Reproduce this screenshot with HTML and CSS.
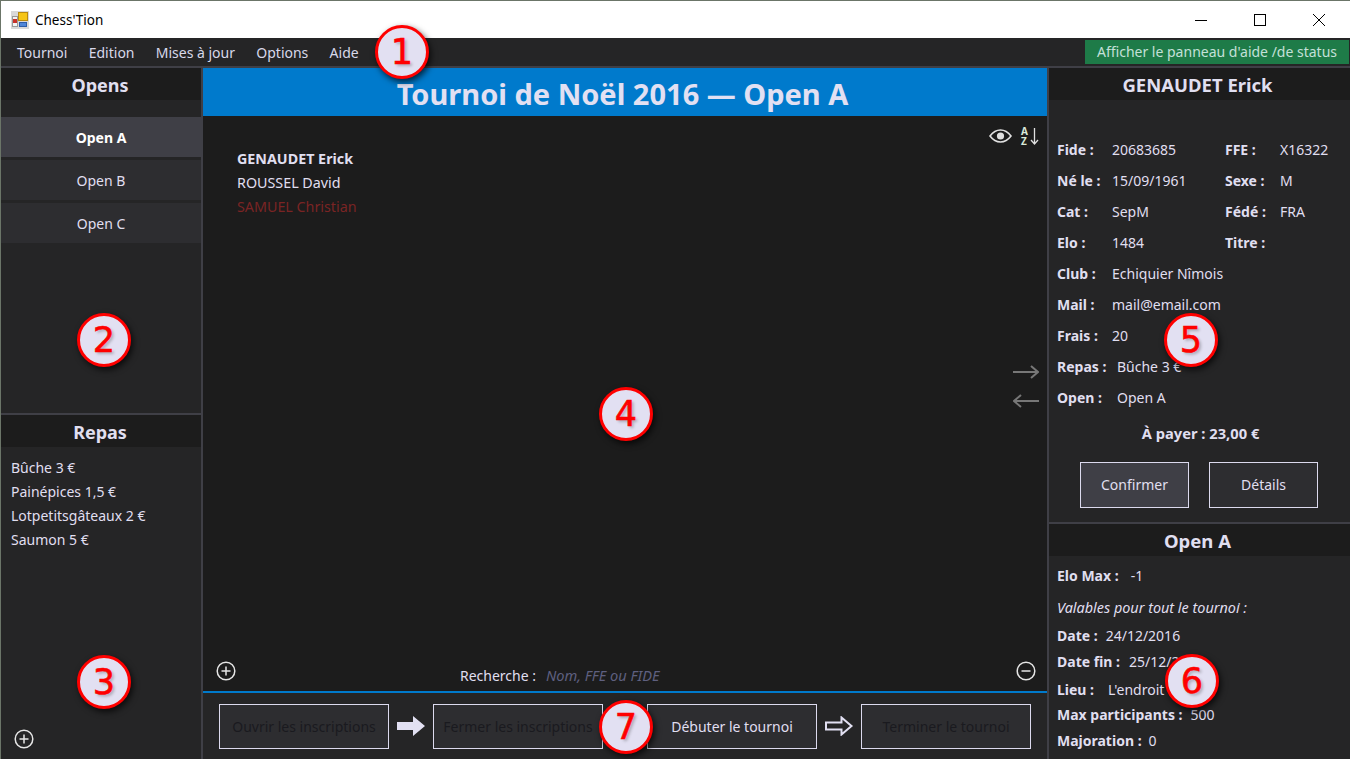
FILE: index.html
```html
<!DOCTYPE html>
<html lang="fr">
<head>
  <meta charset="UTF-8" />
  <title>Chess'Tion</title>
  <link rel="stylesheet" href="styles.css">
</head>
<body>
<div class="window">
  <header class="titlebar">
    <svg class="app-icon" width="18" height="18" viewBox="0 0 18 18">
      <rect x="0" y="0" width="18" height="18" fill="#d9d9d9"/>
      <rect x="7.500" y="1.500" width="9" height="8" fill="#f5c518" stroke="#b98a10"/>
      <rect x="1.500" y="5.500" width="5" height="10" fill="#f4f4f4" stroke="#999"/>
      <rect x="2" y="8" width="4" height="4" fill="#c8322a"/>
      <rect x="8.500" y="11.500" width="7" height="4" fill="#4f86d8" stroke="#2d5ca8"/>
    </svg>
    <span class="app-name">Chess'Tion</span>
    <div class="win-controls">
      <svg class="win-btn" width="14" height="14" viewBox="0 0 14 14"><path d="M1 7.500h12" stroke="#000" fill="none"/></svg>
      <svg class="win-btn" width="14" height="14" viewBox="0 0 14 14"><rect x="1.500" y="1.500" width="11" height="11" stroke="#000" fill="none"/></svg>
      <svg class="win-btn" width="14" height="14" viewBox="0 0 14 14"><path d="M1 1l12 12M13 1L1 13" stroke="#000" fill="none"/></svg>
    </div>
  </header>

  <nav class="menubar">
    <span>Tournoi</span>
    <span>Edition</span>
    <span>Mises à jour</span>
    <span>Options</span>
    <span>Aide</span>
    <div class="status-btn">Afficher le panneau d'aide /de status</div>
  </nav>

  <div class="columns">
    <aside class="left">
      <section class="opens">
        <h2 class="panel-title">Opens</h2>
        <div class="open-list">
          <div class="open-item selected">Open A</div>
          <div class="open-item">Open B</div>
          <div class="open-item">Open C</div>
        </div>
      </section>
      <section class="meals">
        <h2 class="panel-title">Repas</h2>
        <ul class="meal-list">
          <li>Bûche 3 €</li>
          <li>Painépices 1,5 €</li>
          <li>Lotpetitsgâteaux 2 €</li>
          <li>Saumon 5 €</li>
        </ul>
        <svg class="round-icon meal-add" viewBox="0 0 20 20"><circle cx="10" cy="10" r="8.800"/><path d="M10 5.500v9M5.500 10h9"/></svg>
      </section>
    </aside>

    <main class="center">
      <h1 class="banner">Tournoi de Noël 2016 — Open A</h1>
      <div class="players">
        <ul class="player-list">
          <li class="current">GENAUDET Erick</li>
          <li>ROUSSEL David</li>
          <li class="absent">SAMUEL Christian</li>
        </ul>
        <div class="player-side">
          <div class="tools">
            <svg width="23" height="14" viewBox="0 0 23 14"><path d="M1 7c3-4 6.500-6 10.500-6S19 3 22 7c-3 4-6.500 6-10.500 6S4 11 1 7z" fill="none" stroke="#e0e0e0" stroke-width="1.600"/><circle cx="11.500" cy="7" r="3.600" fill="#e0e0e0"/></svg>
            <div class="sort-icon">
              <span class="sort-letters">A<br>Z</span>
              <svg width="9" height="18" viewBox="0 0 9 18"><path d="M4.500 1v16M1 13l3.500 4L8 13" fill="none" stroke="#e0e0e0" stroke-width="1.300"/></svg>
            </div>
          </div>
          <div class="transfer">
            <svg width="26" height="14" viewBox="0 0 26 14"><path d="M0 7h25M18 1l7 6-7 6" fill="none" stroke="#777" stroke-width="2"/></svg>
            <svg width="26" height="14" viewBox="0 0 26 14"><path d="M26 7H1M8 1L1 7l7 6" fill="none" stroke="#777" stroke-width="2"/></svg>
          </div>
        </div>
      </div>
      <div class="search-row">
        <svg class="round-icon" viewBox="0 0 20 20"><circle cx="10" cy="10" r="8.800"/><path d="M10 5.500v9M5.500 10h9"/></svg>
        <div class="search">
          <label for="search">Recherche :</label>
          <input id="search" type="text" placeholder="Nom, FFE ou FIDE" />
        </div>
        <svg class="round-icon" viewBox="0 0 20 20"><circle cx="10" cy="10" r="8.800"/><path d="M5.500 10h9"/></svg>
      </div>
      <footer class="steps">
        <div class="btn step disabled">Ouvrir les inscriptions</div>
        <svg class="step-arrow" width="28" height="20" viewBox="-8 0 44 20"><path d="M0 6h16V0l12 10-12 10v-6H0z" fill="#e2e0f2"/></svg>
        <div class="btn step disabled">Fermer les inscriptions</div>
        <div class="step-arrow"></div>
        <div class="btn step">Débuter le tournoi</div>
        <svg class="step-arrow" width="28" height="20" viewBox="-8 0 44 20"><path d="M1 6.500h15.500V1.500L26.500 10l-10 8.500v-5H1z" fill="none" stroke="#e2e0f2" stroke-width="2"/></svg>
        <div class="btn step disabled">Terminer le tournoi</div>
      </footer>
    </main>

    <aside class="right">
      <section class="player-card">
        <h2 class="panel-title">GENAUDET Erick</h2>
        <div class="facts">
          <div class="fact"><b>Fide :</b><span class="val">20683685</span><b>FFE :</b><span>X16322</span></div>
          <div class="fact"><b>Né le :</b><span class="val">15/09/1961</span><b>Sexe :</b><span>M</span></div>
          <div class="fact"><b>Cat :</b><span class="val">SepM</span><b>Fédé :</b><span>FRA</span></div>
          <div class="fact"><b>Elo :</b><span class="val">1484</span><b>Titre :</b></div>
          <div class="fact"><b>Club :</b><span>Echiquier Nîmois</span></div>
          <div class="fact"><b>Mail :</b><span>mail@email.com</span></div>
          <div class="fact"><b>Frais :</b><span>20</span></div>
          <div class="fact wide"><b>Repas :</b><span>Bûche 3 €</span></div>
          <div class="fact wide"><b>Open :</b><span>Open A</span></div>
        </div>
        <div class="to-pay">À payer : 23,00 €</div>
        <div class="card-actions">
          <div class="btn card-btn hot">Confirmer</div>
          <div class="btn card-btn">Détails</div>
        </div>
      </section>
      <section class="open-card">
        <h2 class="panel-title">Open A</h2>
        <div class="open-facts">
          <div class="info elo"><b>Elo Max :</b><span>-1</span></div>
          <div class="note">Valables pour tout le tournoi :</div>
          <div class="info date"><b>Date :</b><span>24/12/2016</span></div>
          <div class="info end"><b>Date fin :</b><span>25/12/2016</span></div>
          <div class="info place"><b>Lieu :</b><span>L'endroit</span></div>
          <div class="info max"><b>Max participants :</b><span>500</span></div>
          <div class="info raise"><b>Majoration :</b><span>0</span></div>
        </div>
      </section>
    </aside>
  </div>
</div>

<div class="badge b1">1</div>
<div class="badge b2">2</div>
<div class="badge b3">3</div>
<div class="badge b4">4</div>
<div class="badge b5">5</div>
<div class="badge b6">6</div>
<div class="badge b7">7</div>
</body>
</html>
```

FILE: styles.css
```css
* {
  padding: 0;
  margin: 0;
  box-sizing: border-box;
}
body {
  width: 1350px;
  height: 759px;
  overflow: hidden;
  position: relative;
  font-family: "Noto Sans", "Open Sans", sans-serif;
  font-size: 14px;
  color: #e0dff0;
  background: #252526;
}
ul {
  list-style: none;
}
.window {
  height: 759px;
  display: flex;
  flex-direction: column;
  border-top: 1px solid #6b7568;
  border-left: 1px solid #6b7568;
}

/* title bar */
.titlebar {
  height: 37px;
  flex: none;
  background: #fff;
  color: #000;
  display: flex;
  align-items: center;
  padding-left: 10px;
}
.app-icon {
  margin-right: 6px;
}
.app-name {
  font-size: 13.5px;
}
.win-controls {
  margin-left: auto;
  display: flex;
  gap: 45px;
  padding-right: 24px;
}
.win-btn {
  display: block;
}

/* menu */
.menubar {
  height: 28px;
  flex: none;
  background: #252526;
  display: flex;
  align-items: center;
  gap: 21.25px;
  padding-left: 16px;
  color: #d8d8ea;
}
.status-btn {
  margin-left: auto;
  width: 264px;
  height: 24px;
  margin-right: 1px;
  background: #1e7b48;
  color: #c4e0d8;
  text-align: center;
  line-height: 24px;
}

.columns {
  flex: 1;
  display: flex;
  min-height: 0;
  border-top: 2px solid #3f3f46;
}
.left {
  width: 200px;
  flex: none;
  display: flex;
  flex-direction: column;
}
.right {
  flex: 1;
  display: flex;
  flex-direction: column;
}
.center {
  width: 848px;
  flex: none;
  display: flex;
  flex-direction: column;
  background: #1c1c1c;
  border-left: 2px solid #3f3f46;
  border-right: 2px solid #3f3f46;
}

.panel-title {
  height: 32px;
  line-height: 34px;
  background: #1c1c1c;
  text-align: center;
  font-size: 18px;
  font-weight: 700;
  padding-right: 2px;
}
.right .panel-title {
  font-size: 18.5px;
  padding-right: 4px;
}

/* left column */
.opens {
  height: 347px;
  flex: none;
  border-bottom: 2px solid #3f3f46;
}
.open-list {
  padding-top: 17px;
  display: flex;
  flex-direction: column;
  gap: 3px;
}
.open-item {
  height: 40px;
  line-height: 42px;
  text-align: center;
  background: #2d2d30;
}
.open-item.selected {
  background: #3f3f46;
  font-weight: 700;
  color: #fff;
}
.meals {
  flex: 1;
  display: flex;
  flex-direction: column;
}
.meal-list {
  padding: 9px 0 0 10px;
  flex: 1;
}
.meal-list li {
  height: 24px;
  line-height: 24px;
}
.round-icon {
  width: 20px;
  height: 20px;
  display: block;
  flex: none;
  fill: none;
  stroke: #e6e6e6;
  stroke-width: 1.5;
}
.meal-add {
  margin: 0 0 10px 13px;
}

/* centre */
.banner {
  height: 48px;
  flex: none;
  background: #007acc;
  text-align: center;
  line-height: 52px;
  font-size: 29px;
  font-weight: 700;
  color: #e2e0f2;
  padding-right: 5px;
}
.players {
  flex: 1;
  display: flex;
  min-height: 0;
}
.player-list {
  flex: 1;
  padding: 31px 0 0 34px;
  font-size: 14.3px;
}
.player-list li {
  height: 24px;
  line-height: 24px;
}
.player-list .current {
  font-weight: 700;
}
.player-list .absent {
  color: #7a2424;
}
.player-side {
  width: 60px;
  flex: none;
}
.tools {
  display: flex;
  align-items: center;
  gap: 9px;
  padding: 10px 0 0 2px;
}
.sort-icon {
  display: flex;
  align-items: center;
  gap: 2px;
}
.sort-letters {
  font-size: 10px;
  line-height: 10px;
  font-weight: 700;
  color: #d8e8d8;
}
.transfer {
  margin-top: 219px;
  padding-left: 26px;
  display: flex;
  flex-direction: column;
  gap: 15px;
}
.search-row {
  height: 33px;
  flex: none;
  display: flex;
  align-items: flex-start;
  padding: 1px 11px 0 13px;
  border-bottom: 2px solid #007acc;
}
.search {
  flex: 1;
  padding: 4px 0 0 224px;
  display: flex;
  align-items: center;
  gap: 10px;
}
.search label {
  width: 76px;
  flex: none;
  white-space: nowrap;
}
.search input {
  width: 180px;
  background: transparent;
  border: 0;
  font: italic 14.6px "Noto Sans", sans-serif;
  color: #e0dff0;
}
.search input::placeholder {
  color: #5f6080;
  opacity: 1;
}
.steps {
  height: 66px;
  flex: none;
  background: #252526;
  display: flex;
  align-items: center;
  padding-left: 16px;
}
.btn {
  border: 1px solid #dcdaee;
  background: #2d2d30;
  text-align: center;
}
.step {
  width: 170px;
  height: 45px;
  line-height: 43px;
  flex: none;
}
.disabled {
  color: #1a1a1f;
}
.step-arrow {
  width: 44px;
  flex: none;
}

/* right column */
.player-card {
  height: 456px;
  flex: none;
  border-bottom: 2px solid #3f3f46;
}
.facts {
  padding: 34px 0 0 8px;
}
.fact {
  height: 31px;
  display: flex;
  align-items: center;
}
.fact b {
  width: 55px;
  flex: none;
}
.fact .val {
  width: 113px;
  flex: none;
}
.fact.wide b {
  width: 60px;
}
.to-pay {
  margin-top: 8px;
  height: 24px;
  line-height: 24px;
  text-align: center;
  font-size: 14.7px;
  font-weight: 700;
  padding-left: 2px;
}
.card-actions {
  display: flex;
  gap: 20px;
  padding: 17px 0 0 31px;
}
.card-btn {
  width: 109px;
  height: 46px;
  line-height: 44px;
}
.card-btn.hot {
  background: #3f3f46;
}
.open-card {
  flex: 1;
}
.open-facts {
  padding-left: 8px;
}
.info {
  display: flex;
  gap: 8px;
  line-height: 24px;
  height: 24px;
}
.elo { margin-top: 8px; gap: 12px; }
.note {
  margin-top: 8px;
  height: 24px;
  line-height: 24px;
  font-style: italic;
  font-size: 14.4px;
}
.date { margin-top: 4px; }
.end { margin-top: 2px; gap: 9px; }
.place { margin-top: 4px; gap: 9px; }
.place span { margin-left: 5px; }
.max { margin-top: 1px; }
.raise { margin-top: 2px; gap: 7px; }

/* numbered callouts drawn over the screenshot */
.badge {
  position: absolute;
  width: 54px;
  height: 54px;
  border-radius: 50%;
  background: #e2e0f2;
  border: 3px solid #f00;
  box-shadow: 2px 3px 6px rgba(0, 0, 0, 0.7);
  color: #f00;
  font: 35px/48px "DejaVu Sans", sans-serif;
  -webkit-text-stroke: 0.6px #f00;
  text-align: center;
  text-shadow: 2px 2px 3px rgba(0, 0, 0, 0.25);
}
.b1 { left: 375px; top: 25px; }
.b2 { left: 77px; top: 313px; }
.b3 { left: 77px; top: 655px; }
.b4 { left: 599px; top: 387px; }
.b5 { left: 1164px; top: 313px; }
.b6 { left: 1165px; top: 654px; }
.b7 { left: 599px; top: 700px; }
```
